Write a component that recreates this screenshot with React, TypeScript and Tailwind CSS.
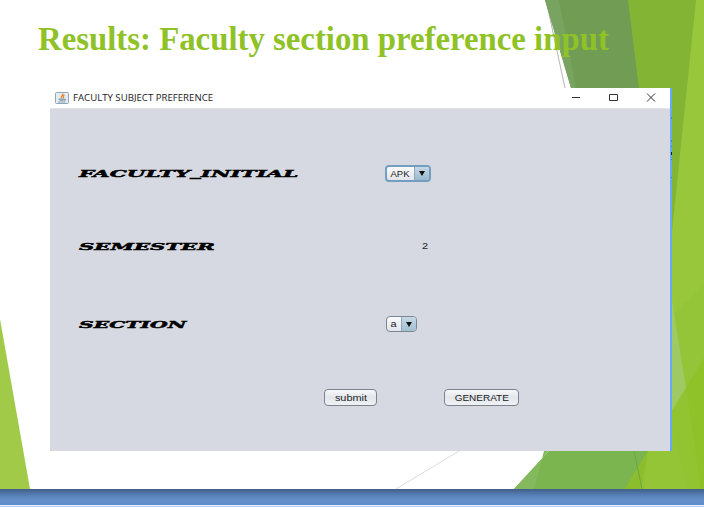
import React from "react";

function Backdrop() {
  return (
    <svg className="absolute inset-0" width="704" height="507" viewBox="0 0 704 507" aria-hidden="true">
      <defs>
        <linearGradient id="bar" x1="0" y1="0" x2="0" y2="1">
          <stop offset="0" stopColor="#415f87" />
          <stop offset="0.4" stopColor="#5880b8" />
          <stop offset="0.65" stopColor="#628dc8" />
          <stop offset="1" stopColor="#628dc8" />
        </linearGradient>
      </defs>
      <path d="M546 0L565 88" stroke="#b5b5b5" fill="none" />
      <path d="M459 451L396 489" stroke="#dcdce0" fill="none" />
      <path d="M640 400H704V489H514L549 451Z" fill="#7bb550" />
      <path d="M545 0H634L646 88L650 150L600 200L571 88Z" fill="#719c54" />
      <path d="M545 0H559L576 88H571Z" fill="#78a360" />
      <path d="M549 451L514 489H534L544 451Z" fill="#84b95e" />
      <path d="M628 0H704V489H625L660 430V260Z" fill="#84b434" />
      <path d="M696 0L672 232V489H704V0Z" fill="#98c73c" />
      <path d="M704 285L672 315V489H704Z" fill="#94c437" />
      <path d="M672 300L686 388L672 411Z" fill="#9fc962" />
      <path d="M704 358L625 489H704Z" fill="#92c432" />
      <path d="M704 358L686 388L701 489H704Z" fill="#8fc129" />
      <path d="M648 451L625 489H641Z" fill="#8bbd2d" />
      <path d="M634 451L642 489" stroke="#6ea546" fill="none" />
      <path d="M672 430L688 489H644L648 451H672Z" fill="#94c537" />
      <path d="M0 319L30 489H0Z" fill="#a0ca48" />
      <rect y="489" width="704" height="16" fill="url(#bar)" />
      <rect y="505" width="704" height="1" fill="#e4f2ff" />
      <rect y="506" width="704" height="1" fill="#aed0fa" />
    </svg>
  );
}

function EdgeMarks() {
  return (
    <svg className="absolute top-[88px] left-[671px]" width="1" height="100" viewBox="0 0 1 100" aria-hidden="true">
      <path d="M0 29h1v2h-1zM0 52h1v2h-1zM0 58h1v1h-1zM0 71h1v1h-1zM0 89h1v1h-1z" fill="#5580a8" />
      <path d="M0 64h1v3h-1z" fill="#16202c" />
    </svg>
  );
}

function JavaIcon() {
  return (
    <svg width="14" height="12" viewBox="0 0 14 12" aria-hidden="true">
      <rect x="0.5" y="0.5" width="13" height="11" rx="1" fill="#e6ecf1" stroke="#8fa5b8" />
      <path d="M7.6 1.6C8.6 3.2 5 4.4 6.6 6.4M9.4 3C7.4 4 9 4.8 8 6.3" stroke="#e8873b" strokeWidth="1.4" fill="none" />
      <path d="M3.6 7H9.4C9.4 8.8 4.8 9.2 3.6 7ZM9.5 7.2C11.5 6.7 11 8.7 9 8.7M3 10H10.5" stroke="#7c98ae" strokeWidth="0.8" fill="#a2b6c6" />
    </svg>
  );
}

function Arrow() {
  return (
    <svg width="6" height="5" viewBox="0 0 6 5" aria-hidden="true">
      <path d="M0 0H6L3 5Z" fill="#111" />
    </svg>
  );
}

const labelClass =
  "inline-block origin-left whitespace-nowrap font-['DejaVu_Serif',serif] text-[9.5px] leading-[12px] font-bold italic text-black [-webkit-text-stroke:0.45px_black]";

export default function App() {
  return (
    <div className="relative h-[507px] w-[704px] overflow-hidden bg-white font-['Liberation_Sans',Arial,sans-serif]">
      <Backdrop />
      <main className="relative flex flex-col">
        <h1 className="h-[88px] pt-[20px] pl-[38px] font-['Liberation_Serif',serif] text-[32.8px] leading-[38px] font-bold whitespace-nowrap text-[#8fc226]">
          Results: Faculty section preference input
        </h1>
        <section className="ml-[50px] flex h-[363px] w-[622px] flex-col border-r-2 border-[#68a9f5] bg-[#d6d9e1]">
          <header className="flex h-[21px] items-center border-b border-[#e3e4e8] bg-white pl-[5px]">
            <JavaIcon />
            <span className="ml-1 w-[499px] font-['Open_Sans',sans-serif] text-[9px] leading-[12px] whitespace-nowrap text-[#222]">
              <span className="inline-block origin-left scale-x-107">FACULTY SUBJECT PREFERENCE</span>
            </span>
            <svg width="86" height="10" viewBox="0 0 86 10" className="shrink-0" fill="none" stroke="#333" aria-hidden="true">
              <path d="M0 4.5H8M37.5 1.5H45.5V7.5H37.5ZM75 0.5L83 8.5M83 0.5L75 8.5" />
            </svg>
          </header>
          <div className="flex h-[130px] items-center pl-[29px]">
            <div className="-mt-[4px] w-[306px]">
              <span className={labelClass + " scale-x-[2.26]"}>FACULTY_INITIAL</span>
            </div>
            <button className="-mt-px flex h-[17px] w-[46px] overflow-hidden rounded-[4px] border-2 border-[#729fc0] bg-gradient-to-b from-[#fafafc] to-[#e2e5eb] text-[9.5px] leading-[14px] text-[#222]">
              <span className="w-[28px] border-r border-[#91a7b8] pr-px text-center">APK</span>
              <span className="flex h-full flex-1 items-center justify-center bg-gradient-to-b from-[#c6d8e5] to-[#98b9d0]"><Arrow /></span>
            </button>
          </div>
          <div className="flex h-[14px] items-center pl-[29px]">
            <div className="-mt-[2px] w-[343px]">
              <span className={labelClass + " scale-x-[2.23]"}>SEMESTER</span>
            </div>
            <span className="origin-left scale-x-115 text-[9.5px] leading-[12px] text-[#222]">2</span>
          </div>
          <div className="flex h-[143px] items-center pl-[29px]">
            <div className="-mt-[3px] w-[307px]">
              <span className={labelClass + " scale-x-[2.14]"}>SECTION</span>
            </div>
            <button className="-mt-px flex h-[16px] w-[31px] overflow-hidden rounded-[4px] border border-[#7c8794] bg-gradient-to-b from-[#fafafc] to-[#e2e5eb] text-[9.5px] leading-[14px] text-[#222]">
              <span className="w-[15px] border-r border-[#91a7b8] text-center">
                <span className="inline-block scale-x-115">a</span>
              </span>
              <span className="flex h-full flex-1 items-center justify-center bg-gradient-to-b from-[#c6d8e5] to-[#a3bfd2]"><Arrow /></span>
            </button>
          </div>
          <div className="-mt-[7px] flex gap-[67px] pl-[274px]">
            <button className="h-[17px] w-[53px] rounded-[4px] border border-[#7d838c] bg-gradient-to-b from-[#f7f8fa] via-[#e3e6ea] to-[#eff1f5] text-[9.5px] leading-[15px] text-[#222]">
              <span className="inline-block scale-x-115">submit</span>
            </button>
            <button className="h-[17px] w-[75px] rounded-[4px] border border-[#7d838c] bg-gradient-to-b from-[#f7f8fa] via-[#e3e6ea] to-[#eff1f5] text-[9.5px] leading-[15px] whitespace-nowrap text-[#222]">
              <span className="inline-block scale-x-105">GENERATE</span>
            </button>
          </div>
        </section>
      </main>
      <EdgeMarks />
    </div>
  );
}
